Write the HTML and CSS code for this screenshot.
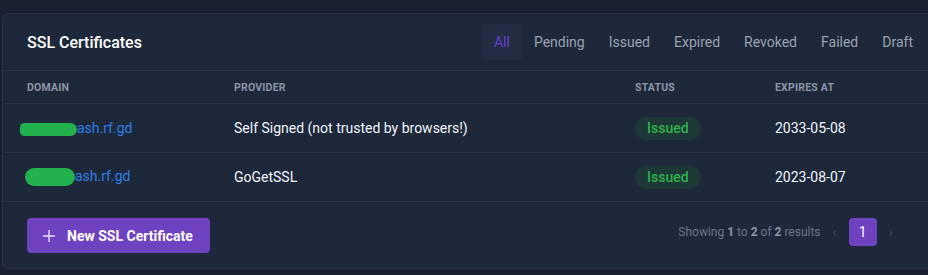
FILE: index.html
```html
<!DOCTYPE html>
<html lang="en">
<head>
    <meta charset="UTF-8">
    <title>SSL Certificates</title>
    <link rel="stylesheet" href="styles.css">
</head>
<body>
    <div class="page">
        <div class="card">
            <div class="card__header">
                <h1>SSL Certificates</h1>
                <nav class="tabs">
                    <a class="tab tab--active">All</a>
                    <a class="tab">Pending</a>
                    <a class="tab">Issued</a>
                    <a class="tab">Expired</a>
                    <a class="tab">Revoked</a>
                    <a class="tab">Failed</a>
                    <a class="tab">Draft</a>
                </nav>
            </div>
            <div class="table">
                <div class="row row--head">
                    <div class="cell">Domain</div>
                    <div class="cell">Provider</div>
                    <div class="cell">Status</div>
                    <div class="cell">Expires at</div>
                </div>
                <div class="row">
                    <div class="cell"><a class="domain"><span class="redact redact--one"></span>ash.rf.gd</a></div>
                    <div class="cell">Self Signed (not trusted by browsers!)</div>
                    <div class="cell"><span class="badge">Issued</span></div>
                    <div class="cell">2033-05-08</div>
                </div>
                <div class="row">
                    <div class="cell"><a class="domain"><span class="redact redact--two"></span>ash.rf.gd</a></div>
                    <div class="cell">GoGetSSL</div>
                    <div class="cell"><span class="badge">Issued</span></div>
                    <div class="cell">2023-08-07</div>
                </div>
            </div>
            <div class="card__footer">
                <button class="btn">
                    <svg width="14" height="14" viewBox="0 0 14 14"><path d="M7 1v12M1 7h12" stroke="#e9e3f7" stroke-width="1.4" fill="none"/></svg>
                    New SSL Certificate
                </button>
                <div class="pager">
                    <span class="pager__info">Showing <b>1</b> to <b>2</b> of <b>2</b> results</span>
                    <span class="pager__arrow">&lsaquo;</span>
                    <span class="pager__page">1</span>
                    <span class="pager__arrow">&rsaquo;</span>
                </div>
            </div>
        </div>
    </div>
</body>
</html>
```

FILE: styles.css
```css
* {
    box-sizing: border-box;
}
body {
    margin: 0;
    padding: 0;
    background: #1a2030;
    font-family: Roboto, "Liberation Sans", sans-serif;
    color: #f1f4f8;
    overflow: hidden;
}
.page {
    padding: 13px 0 0 2px;
}
.card {
    width: 934px;
    background: #1e283b;
    border: 1px solid #283246;
    border-radius: 6px;
}
.card__header {
    display: flex;
    align-items: center;
    justify-content: space-between;
    padding: 10px 0 10px 24px;
    border-bottom: 1px solid #2a3448;
}
.card h1 {
    margin: 0;
    font-size: 16px;
    font-weight: 500;
    color: #ffffff;
}
.tabs {
    display: flex;
    padding-right: 10px;
}
.tab {
    padding: 8px 12px;
    font-size: 14px;
    line-height: 20px;
    color: #98a1b0;
    border-radius: 4px;
}
.tab--active {
    color: #6a40d6;
    background: #222d42;
}
.row {
    display: grid;
    grid-template-columns: 207px 401px 140px 1fr;
    align-items: center;
    height: 49px;
    border-bottom: 1px solid #2a3448;
    font-size: 14px;
}
.row--head {
    height: 33px;
    font-size: 10.5px;
    font-weight: 700;
    text-transform: uppercase;
    letter-spacing: 0.02em;
    color: #8c95a4;
}
.cell {
    padding-left: 24px;
}
.domain {
    color: #2f7de6;
}
.redact {
    display: inline-block;
    vertical-align: middle;
    background: #22b14c;
    border-radius: 8px;
}
.redact--one {
    width: 57px;
    height: 13px;
    margin-left: -7px;
    border-radius: 7px 10px 10px 7px;
}
.redact--two {
    width: 50px;
    height: 18px;
    margin-left: -2px;
    border-radius: 9px;
}
.badge {
    display: inline-block;
    padding: 2px 12px;
    line-height: 19px;
    border-radius: 12px;
    background: #1d3837;
    color: #2db24a;
    font-weight: 500;
}
.card__footer {
    display: flex;
    align-items: center;
    justify-content: space-between;
    padding: 16px 0 15px 24px;
}
.btn {
    display: flex;
    align-items: center;
    gap: 11px;
    height: 35px;
    padding: 0 17px 0 15px;
    border: none;
    border-radius: 4px;
    background: #6f42c1;
    color: #ffffff;
    font-family: inherit;
    font-size: 14px;
    font-weight: 700;
}
.pager {
    display: flex;
    align-items: center;
    align-self: flex-start;
    margin-right: 30px;
    font-size: 12px;
    color: #6b7587;
}
.pager__info b {
    color: #8c95a4;
}
.pager__arrow {
    margin: 0 12px;
    color: #3e4a5e;
    font-size: 14px;
}
.pager__page {
    width: 28px;
    height: 28px;
    display: flex;
    align-items: center;
    justify-content: center;
    border-radius: 4px;
    background: #6f42c1;
    color: #ffffff;
    font-size: 14px;
}
```
